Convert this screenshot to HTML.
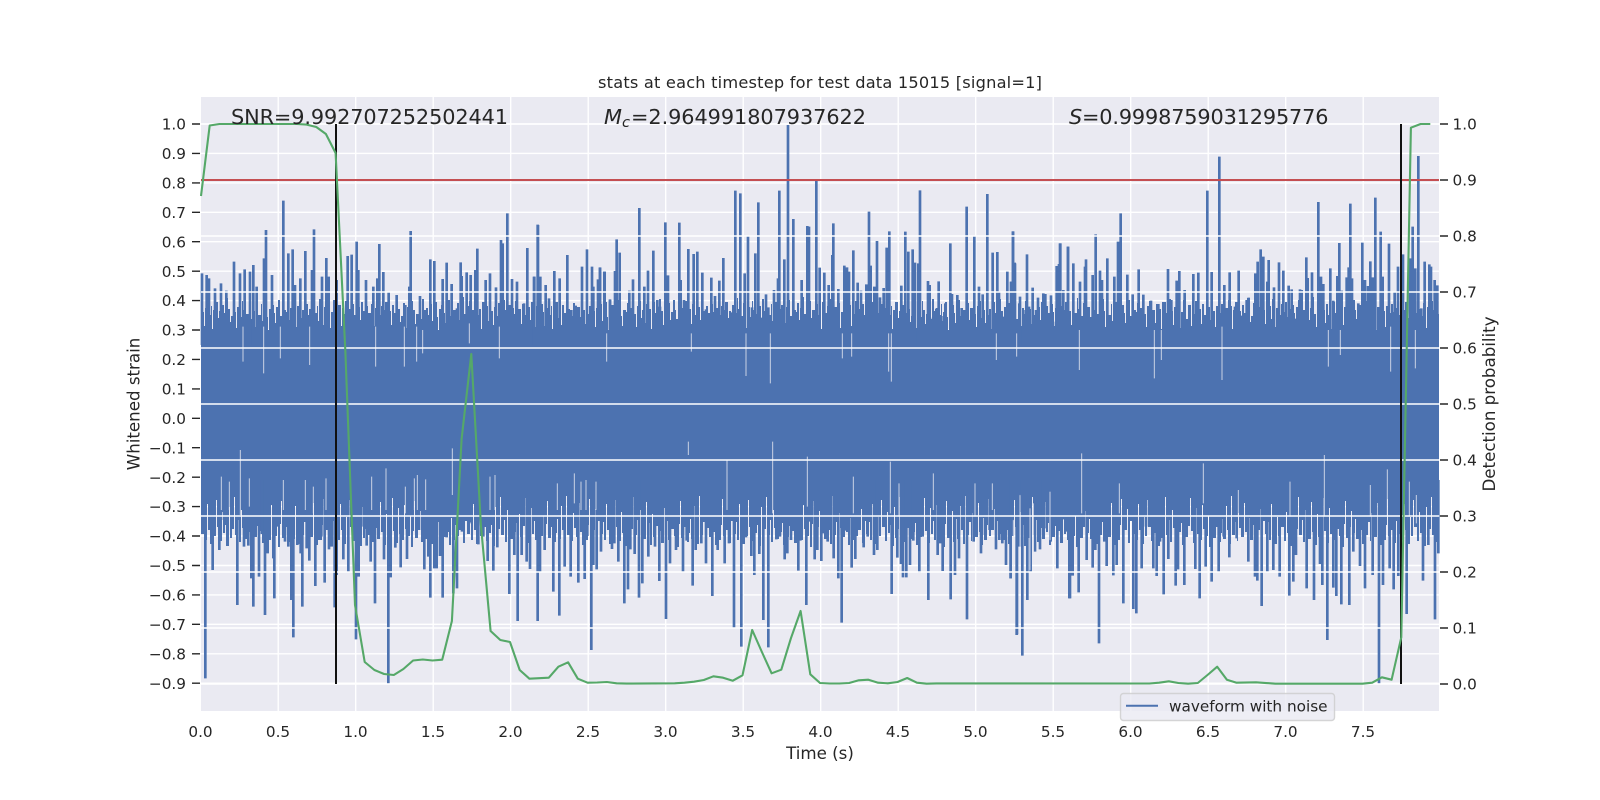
<!DOCTYPE html>
<html>
<head>
<meta charset="utf-8">
<style>
html,body{margin:0;padding:0;background:#fff;width:1600px;height:800px;overflow:hidden}
svg{display:block}
text{font-family:"DejaVu Sans","Liberation Sans",sans-serif;fill:#262626}
.t{font-size:15.28px}
.l{font-size:16.67px}
.a{font-size:20.83px}
</style>
</head>
<body>
<svg xmlns="http://www.w3.org/2000/svg" width="1600" height="800" viewBox="0 0 1600 800">
<defs>
<pattern id="pt" patternUnits="userSpaceOnUse" x="201" y="282" width="170" height="50">
<path fill="#4c72b0" shape-rendering="crispEdges" d="M0 50V22h2V30h1V44h1V26h3V18h1V33h2V24h1V47h1V28h2V20h3V36h1V29h2V43h1V23h2V31h3V16h1V27h2V40h1V34h2V21h2V30h1V46h1V25h3V35h2V19h1V28h2V42h1V32h3V24h2V37h1V17h2V29h1V45h1V26h2V33h3V22h1V39h1V30h2V20h2V35h1V48h1V27h2V23h3V31h1V41h1V25h2V18h2V34h2V44h1V28h3V30h1V21h2V38h1V26h3V15h1V32h2V45h1V24h2V19h2V36h1V28h3V41h1V22h2V33h1V27h2V47h1V20h3V31h2V24h1V39h1V17h2V29h2V43h1V25h3V34h1V21h2V46h1V30h2V18h2V28h1V37h2V23h3V44h1V26h2V32h1V19h2V35h1V27h3V42h1V22h2V33h2V48h1V25h3V38h1V20h2V29h2V45h1V24h2V31h3V50Z"/>
</pattern>
<pattern id="pb" patternUnits="userSpaceOnUse" x="201" y="492" width="133" height="60">
<path fill="#4c72b0" shape-rendering="crispEdges" d="M0 0V42h3V30h1V48h2V12h1V38h2V52h3V25h1V44h2V8h1V35h3V49h2V20h1V41h2V33h1V54h3V15h1V46h2V37h2V5h1V43h3V28h1V50h2V18h1V36h2V47h3V10h1V40h2V31h1V53h2V22h1V45h3V34h2V6h1V39h2V51h3V16h1V42h2V29h1V48h2V13h1V37h3V44h2V24h1V55h2V32h1V9h1V46h3V35h2V19h1V50h2V41h1V27h1V47h3V14h1V38h2V52h2V4h1V43h3V30h2V49h1V21h1V36h2V45h3V11h1V40h2V53h2V26h1V48h3V33h1V7h1V44h2V38h3V17h1V51h2V29h2V0Z"/>
</pattern>
</defs>
<rect width="1600" height="800" fill="#fff"/>
<rect x="201" y="97" width="1238" height="614" fill="#eaeaf2"/>
<g stroke="#fff" stroke-width="1.4" fill="none">
<path d="M278.2 97V711M355.7 97V711M433.2 97V711M510.7 97V711M588.2 97V711M665.7 97V711M743.2 97V711M820.7 97V711M898.2 97V711M975.7 97V711M1053.2 97V711M1130.7 97V711M1208.2 97V711M1285.7 97V711M1363.2 97V711"/>
<path d="M201 124H1439M201 153.4H1439M201 182.9H1439M201 212.3H1439M201 241.7H1439M201 271.2H1439M201 300.6H1439M201 330H1439M201 359.4H1439M201 388.9H1439M201 418.3H1439M201 447.7H1439M201 477.2H1439M201 506.6H1439M201 536H1439M201 565.5H1439M201 594.9H1439M201 624.3H1439M201 653.8H1439M201 683.2H1439"/>
</g>
<rect x="201" y="332" width="1238" height="160" fill="#4c72b0"/>
<rect x="201" y="282" width="1238" height="50" fill="url(#pt)"/>
<rect x="201" y="492" width="1238" height="60" fill="url(#pb)"/>
<g fill="none" stroke="#4c72b0" stroke-width="8">
<path transform="translate(120 60) scale(.33333)" d="M246 640V855M260 645V855M267 655V855M285 685V855M303 670V855M319 692V855M342 605V855M360 640V855M374 628V855M390 635V855M400 615V855M410 680V855M438 510V855M432 595V855M456 645V855M490 422V855M505 580V855M518 568V855M525 675V855M541 655V855M556 573V855M582 508V855M576 630V855M606 650V855M619 594V855M626 650V855M650 660V855M683 588V855M695 584V855M710 545V855M715 630V855M738 660V855M760 680V855M778 552V855M790 636V855M772 655V855M806 695V855M830 705V855M856 735V855M872 513V855M868 680V855M900 708V855M916 750V855M931 598V855M943 603V855M968 657V855M980 608V855M995 672V855M1011 745V855M1022 607V855M1025 648V855M1040 637V855M1052 645V855M1072 566V855M1066 630V855M1097 660V855M1110 640V855M1128 682V855M1143 540V855M1148 550V855M1162 460V855M1176 657V855M1191 665V855M1212 730V855M1222 564V855M1242 650V855M1254 495V855"/>
<path transform="translate(530 190) scale(.33333)" d="M23 104V465M13 260V465M31 260V465M47 285V465M57 325V465M73 243V465M89 265V465M112 195V465M124 360V465M137 347V465M156 230V465M171 178V465M186 230V465M190 290V465M204 268V465M210 232V465M224 245V465M240 330V465"/>
<path transform="translate(600 100) scale(.33333)" d="M0 503V735M13 515V735M50 418V735M59 458V735M45 513V735M30 598V735M88 572V735M99 538V735M118 324V735M133 560V735M144 512V735M160 452V735M172 600V735M180 620V735M196 367V735M204 526V735M212 660V735M238 368V735M242 540V735M252 600V735M265 447V735M281 462V735M292 455V735M307 518V735M318 628V735M334 533V735M345 588V735M358 542V735M370 474V735M397 637V735M406 272V735M421 280V735M434 520V735M444 408V735M456 622V735M466 460V735M475 307V735M485 653V735M498 583V735M505 622V735M522 570V735M534 535V735M538 272V735M553 478V735M564 75V735M580 357V735M605 540V735M622 378V735M627 380V735M649 243V735M659 503V735M673 518V735M686 555V735M700 370V735M697 465V735M715 567V735M733 497V735M741 502V735M747 515V735M760 451V735M773 548V735M783 572V735M799 553V735M807 335V735M812 497V735M823 560V735M831 423V735M840 592V735M851 564V735M860 443V735M868 394V735M884 645V735M904 557V735M916 395V735M925 455V735M938 448V735M945 488V735M955 490V735M960 271V735M971 692V735M984 543V735M989 555V735M999 653V735M1009 626V735M1016 544V735M1024 648V735M1036 610V735M1051 430V735M1056 582V735M1072 585V735M1085 624V735M1100 320V735M1123 408V735M1137 560V735M1148 583V735M1162 282V735M1178 458V735M1192 456V735M1197 574V735M1212 650V735M1222 515V735M1234 545V735M1239 394V735M1245 490V735M1258 610V735"/>
<path transform="translate(1010 190) scale(.33333)" d="M3 275V465M9 124V465M14 218V465M30 320V465M40 360V465M51 193V465M57 350V465M68 293V465M78 360V465M84 323V465M100 310V465M106 312V465M117 378V465M123 316V465M129 395V465M140 228V465M147 222V465M151 160V465M160 300V465M174 170V465"/>
<path transform="translate(1060 60) scale(.33333)" d="M0 550V855M24 560V855M40 610V855M60 665V855M78 598V855M75 620V855M98 645V855M107 523V855M120 632V855M126 660V855M142 595V855M163 650V855M174 545V855M182 460V855M202 644V855M218 703V855M236 628V855M250 704V855M273 722V855M295 732V855M314 726V855M324 627V855M334 720V855M350 662V855M358 633V855M374 690V855M400 642V855M415 638V855M442 392V855M455 636V855M478 290V855M493 675V855M509 637V855M525 740V855M536 632V855M544 767V855M560 720V855M566 713V855M586 640V855M593 605V855M602 568V855M610 590V855M626 600V855M622 665V855M642 682V855M657 607V855M670 632V855M686 677V855M695 688V855M708 776V855M720 688V855M725 690V855M739 592V855M743 654V855M756 637V855M775 426V855M783 650V855M790 672V855M811 625V855M820 722V855M832 648V855M838 549V855M845 692V855M860 652V855M866 622V855M871 431V855M876 655V855M895 730V855M907 548V855M915 660V855M924 678V855M931 604V855M938 652V855M946 413V855M962 515V855M968 650V855M987 551V855M1004 695V855M1014 620V855M1029 583V855M1050 595V855M1058 500V855M1066 625V855M1075 288V855M1084 745V855M1094 605V855M1108 613V855M1113 620V855M1124 660V855M1132 676V855"/>
<path transform="translate(180 430) scale(.33333)" d="M67 305V150M76 745V150M98 420V150M118 360V150M132 270V150M143 325V150M158 295V150M172 525V150M192 350V150M205 347V150M214 445V150M220 530V150M237 440V150M246 312V150M255 555V150M263 370V150M280 385V150M283 505V150M295 290V150M315 335V150M325 350V150M334 510V150M340 622V150M352 345V150M362 370V150M367 530V150M380 355V150M388 392V150M406 468V150M417 330V150M424 320V150M434 458V150M447 358V150M455 350V150M464 532V150M470 435V150M490 388V150M505 425V150M528 628V150M536 440V150M544 290V150M560 347V150M572 395V150M585 520V150M596 300V150M612 388V150M625 760V150M632 442V150M646 353V150M662 412V150M681 387V150M698 303V150M717 300V150M733 418V150M745 380V150M751 503V150M763 415V150M770 415V150M780 378V150M788 503V150M800 322V150M820 490V150M831 475V150M846 305V150M868 280V150M895 343V150M910 320V150M923 393V150M940 422V150M952 352V150M967 265V150M988 492V150M1003 375V150M1013 573V150M1025 375V150M1040 395V150M1050 417V150M1073 573V150M1080 425V150M1094 360V150M1120 485V150M1138 557V150M1154 410V150M1172 440V150M1195 458V150M1214 447V150M1222 318V150M1234 660V150M1240 405V150M1250 418V150"/>
<path transform="translate(600 420) scale(.33333)" d="M3 395V180M36 387V180M43 370V180M55 425V180M73 550V180M84 508V180M91 388V180M104 402V180M117 533V180M127 490V180M145 410V180M165 380V180M178 483V180M198 597V180M210 430V180M228 390V180M249 456V180M260 362V180M278 497V180M287 390V180M304 370V180M318 430V180M337 528V180M353 390V180M374 430V180M387 370V180M402 625V180M424 680V180M438 352V180M454 408V180M463 465V180M478 402V180M490 600V180M505 682V180M529 358V180M540 350V180M554 418V180M562 400V180M573 360V180M595 452V180M601 362V180M619 555V180M630 305V180M644 418V180M652 390V180M664 423V180M672 340V180M683 365V180M701 415V180M715 475V180M725 608V180M735 332V180M755 443V180M766 417V180M773 330V180M791 382V180M803 350V180M822 405V180M832 390V180M875 522V180M892 413V180M903 432V180M909 472V180M919 472V180M930 435V180M940 362V180M958 458V180M968 350V180M985 540V180M1013 405V180M1020 370V180M1028 453V180M1052 538V180M1065 465V180M1077 415V180M1101 598V180M1121 365V180M1143 400V180M1155 345V180M1169 330V180M1188 388V180M1198 360V180M1207 370V180M1218 435V180M1232 475V180M1251 643V180M1258 380V180"/>
<path transform="translate(1010 490) scale(.33333)" d="M2 265V-30M20 435V-30M37 497V-30M52 330V-30M62 245V-30M75 185V-30M90 178V-30M100 125V-30M110 115V-30M122 155V-30M142 235V-30M152 100V-30M160 88V-30M170 125V-30M178 325V-30"/>
<path transform="translate(1060 430) scale(.33333)" d="M0 285V150M30 505V150M38 437V150M56 487V150M80 390V150M98 413V150M106 360V150M117 640V150M133 335V150M140 408V150M160 436V150M170 405V150M190 520V150M220 537V150M229 550V150M245 415V150M258 290V150M280 415V150M290 438V150M300 335V150M311 493V150M325 387V150M347 467V150M354 418V150M373 465V150M406 417V150M419 505V150M437 410V150M455 455V150M476 425V150M491 320V150M508 382V150M530 325V150M565 395V150M585 440V150M592 452V150M605 528V150M622 425V150M640 420V150M659 440V150M688 497V150M700 455V150M708 375V150M740 475V150M762 510V150M780 402V150M787 465V150M802 630V150M820 473V150M829 498V150M844 523V150M868 525V150M880 365V150M900 408V150M915 475V150M938 435V150M957 760V150M969 465V150M989 415V150M1001 478V150M1015 438V150M1040 552V150M1089 452V150M1105 345V150M1125 568V150M1135 370V150"/>
</g>
<g fill="none" stroke="#eaeaf2" stroke-width="3" opacity=".8">
<path transform="translate(180 430) scale(.33333)" d="M181 60V255M124 140V240M148 155V240M208 145V230M310 150V240M376 150V240M400 170V250M438 145V240M575 140V240M618 115V240M676 170V250M703 145V240M712 135V240M737 148V240M817 55V195M930 140V240M945 135V240M1132 160V240M1183 130V220M1203 155V240M1218 150V240M1248 155V240"/>
<path transform="translate(600 420) scale(.33333)" d="M265 65V105M381 120V270M518 65V280M622 110V260M760 170V280M871 125V280M897 190V290M1000 160V270M1125 190V290M1177 190V270"/>
<path transform="translate(1060 430) scale(.33333)" d="M65 70V250M178 160V250M430 100V220M535 180V260M690 155V260M793 75V260M931 165V260M982 118V260M1048 155V260M1069 195V280"/>
<path transform="translate(1010 490) scale(.33333)" d="M10 90V240M30 15V240M60 55V240M70 40V190M120 5V150"/>
<path transform="translate(120 60) scale(.33333)" d="M369 800V905M431 800V940M481 800V895M569 800V915M767 800V920M853 800V920M890 800V905M908 810V880M1048 790V850M1138 800V895"/>
<path transform="translate(600 100) scale(.33333)" d="M20 700V785M438 700V828M511 700V850M866 700V815M874 700V845M1189 700V780M1250 700V770M274 700V755M727 700V775M755 700V770"/>
<path transform="translate(1060 60) scale(.33333)" d="M58 810V930M283 810V955M304 810V900M486 800V960M805 810V920M841 810V885M992 800V935M1066 810V925"/>
</g>
<path d="M201 124H1439M201 180H1439M201 236H1439M201 292H1439M201 348H1439M201 404H1439M201 460H1439M201 516H1439M201 572H1439M201 628H1439M201 684H1439" stroke="#fff" stroke-width="1.4" fill="none"/>
<path d="M201 180H1439" stroke="#c44e52" stroke-width="2" fill="none"/>
<path d="M336 124V684M1401 124V684" stroke="#111" stroke-width="2" fill="none"/>
<polyline fill="none" stroke="#55a868" stroke-width="2.1" stroke-linejoin="round" points="201,196 209.7,125.5 219.4,124 296.9,124 306.6,124.6 316.3,127 325.9,134 335.6,153 345.3,350 355,605 364.7,662 374.4,670 384.1,674 393.8,675 403.4,669 413.1,660.5 422.8,659.5 432.5,660.5 442.2,659.7 451.9,621 461.6,439 471.3,354 480.9,525 490.6,631 500.3,640 510,642 519.7,670 529.4,678.7 539.1,678.2 548.8,677.7 558.4,666.7 568.1,662.3 577.8,678.7 587.5,682.7 597.2,682.5 606.9,682 616.6,683.3 626.3,683.6 674.7,683.3 684.4,682.7 694.1,681.7 703.8,680 713.4,676.3 723.1,677.7 732.8,680.7 742.5,675.3 752.2,630 761.9,652 771.6,673.3 781.3,669.7 790.9,638.3 800.6,611 810.3,674.3 820,683 829.7,683.5 839.4,683.5 849.1,683 858.8,680.3 868.4,679.7 878.1,682.7 887.8,683.3 897.5,682 907.2,678 916.9,682.7 926.6,683.7 936.3,683.4 1149.4,683.5 1159.1,682.7 1168.8,681.3 1178.4,683 1188.1,683.7 1197.8,683 1207.5,675 1217.2,666.7 1226.9,679.7 1236.6,682.7 1256,682.3 1275.3,683.7 1362.5,683.7 1372.2,682.7 1381.9,677.3 1391.6,679.7 1401.3,637.3 1410.9,127.7 1420.6,124 1430.3,124"/>
<path d="M192 124H200M192 153.4H200M192 182.9H200M192 212.3H200M192 241.7H200M192 271.2H200M192 300.6H200M192 330H200M192 359.4H200M192 388.9H200M192 418.3H200M192 447.7H200M192 477.2H200M192 506.6H200M192 536H200M192 565.5H200M192 594.9H200M192 624.3H200M192 653.8H200M192 683.2H200" stroke="#262626" stroke-width="1.4" fill="none"/>
<path d="M1440 124H1448M1440 180H1448M1440 236H1448M1440 292H1448M1440 348H1448M1440 404H1448M1440 460H1448M1440 516H1448M1440 572H1448M1440 628H1448M1440 684H1448" stroke="#262626" stroke-width="1.4" fill="none"/>
<g class="t" text-anchor="end">
<text x="186" y="129.6">1.0</text><text x="186" y="159">0.9</text><text x="186" y="188.5">0.8</text><text x="186" y="217.9">0.7</text><text x="186" y="247.3">0.6</text><text x="186" y="276.8">0.5</text><text x="186" y="306.2">0.4</text><text x="186" y="335.6">0.3</text><text x="186" y="365">0.2</text><text x="186" y="394.5">0.1</text><text x="186" y="423.9">0.0</text><text x="186" y="453.3">−0.1</text><text x="186" y="482.8">−0.2</text><text x="186" y="512.2">−0.3</text><text x="186" y="541.6">−0.4</text><text x="186" y="571.1">−0.5</text><text x="186" y="600.5">−0.6</text><text x="186" y="629.9">−0.7</text><text x="186" y="659.4">−0.8</text><text x="186" y="688.8">−0.9</text>
</g>
<g class="t">
<text x="1452.5" y="129.6">1.0</text><text x="1452.5" y="185.6">0.9</text><text x="1452.5" y="241.6">0.8</text><text x="1452.5" y="297.6">0.7</text><text x="1452.5" y="353.6">0.6</text><text x="1452.5" y="409.6">0.5</text><text x="1452.5" y="465.6">0.4</text><text x="1452.5" y="521.6">0.3</text><text x="1452.5" y="577.6">0.2</text><text x="1452.5" y="633.6">0.1</text><text x="1452.5" y="689.6">0.0</text>
</g>
<g class="t" text-anchor="middle">
<text x="200.5" y="737">0.0</text><text x="278" y="737">0.5</text><text x="355.5" y="737">1.0</text><text x="433" y="737">1.5</text><text x="510.5" y="737">2.0</text><text x="588" y="737">2.5</text><text x="665.5" y="737">3.0</text><text x="743" y="737">3.5</text><text x="820.5" y="737">4.0</text><text x="898" y="737">4.5</text><text x="975.5" y="737">5.0</text><text x="1053" y="737">5.5</text><text x="1130.5" y="737">6.0</text><text x="1208" y="737">6.5</text><text x="1285.5" y="737">7.0</text><text x="1363" y="737">7.5</text>
</g>
<text class="l" x="820" y="759" text-anchor="middle">Time (s)</text>
<text class="l" text-anchor="middle" transform="translate(139.3 404) rotate(-90)">Whitened strain</text>
<text class="l" text-anchor="middle" transform="translate(1495 404) rotate(-90)">Detection probability</text>
<text x="598" y="88" style="font-size:16.2px" textLength="444" lengthAdjust="spacing">stats at each timestep for test data 15015 [signal=1]</text>
<text class="a" x="231" y="124" textLength="277" lengthAdjust="spacing">SNR=9.992707252502441</text>
<text class="a" x="604" y="124" font-style="italic">M</text>
<text x="622" y="127" font-size="14.6" font-style="italic">c</text>
<text class="a" x="631" y="124" textLength="235" lengthAdjust="spacing">=2.964991807937622</text>
<text class="a" x="1069" y="124" font-style="italic">S</text>
<text class="a" x="1082" y="124" textLength="246.5" lengthAdjust="spacing">=0.9998759031295776</text>
<rect x="1120.5" y="693.5" width="214" height="27" rx="3" ry="3" fill="#eaeaf2" fill-opacity=".8" stroke="#ccc" stroke-opacity=".8" stroke-width="1.4"/>
<path d="M1126 705.7H1158" stroke="#4c72b0" stroke-width="2" fill="none"/>
<text class="t" x="1169" y="711.4">waveform with noise</text>
</svg>
</body>
</html>
